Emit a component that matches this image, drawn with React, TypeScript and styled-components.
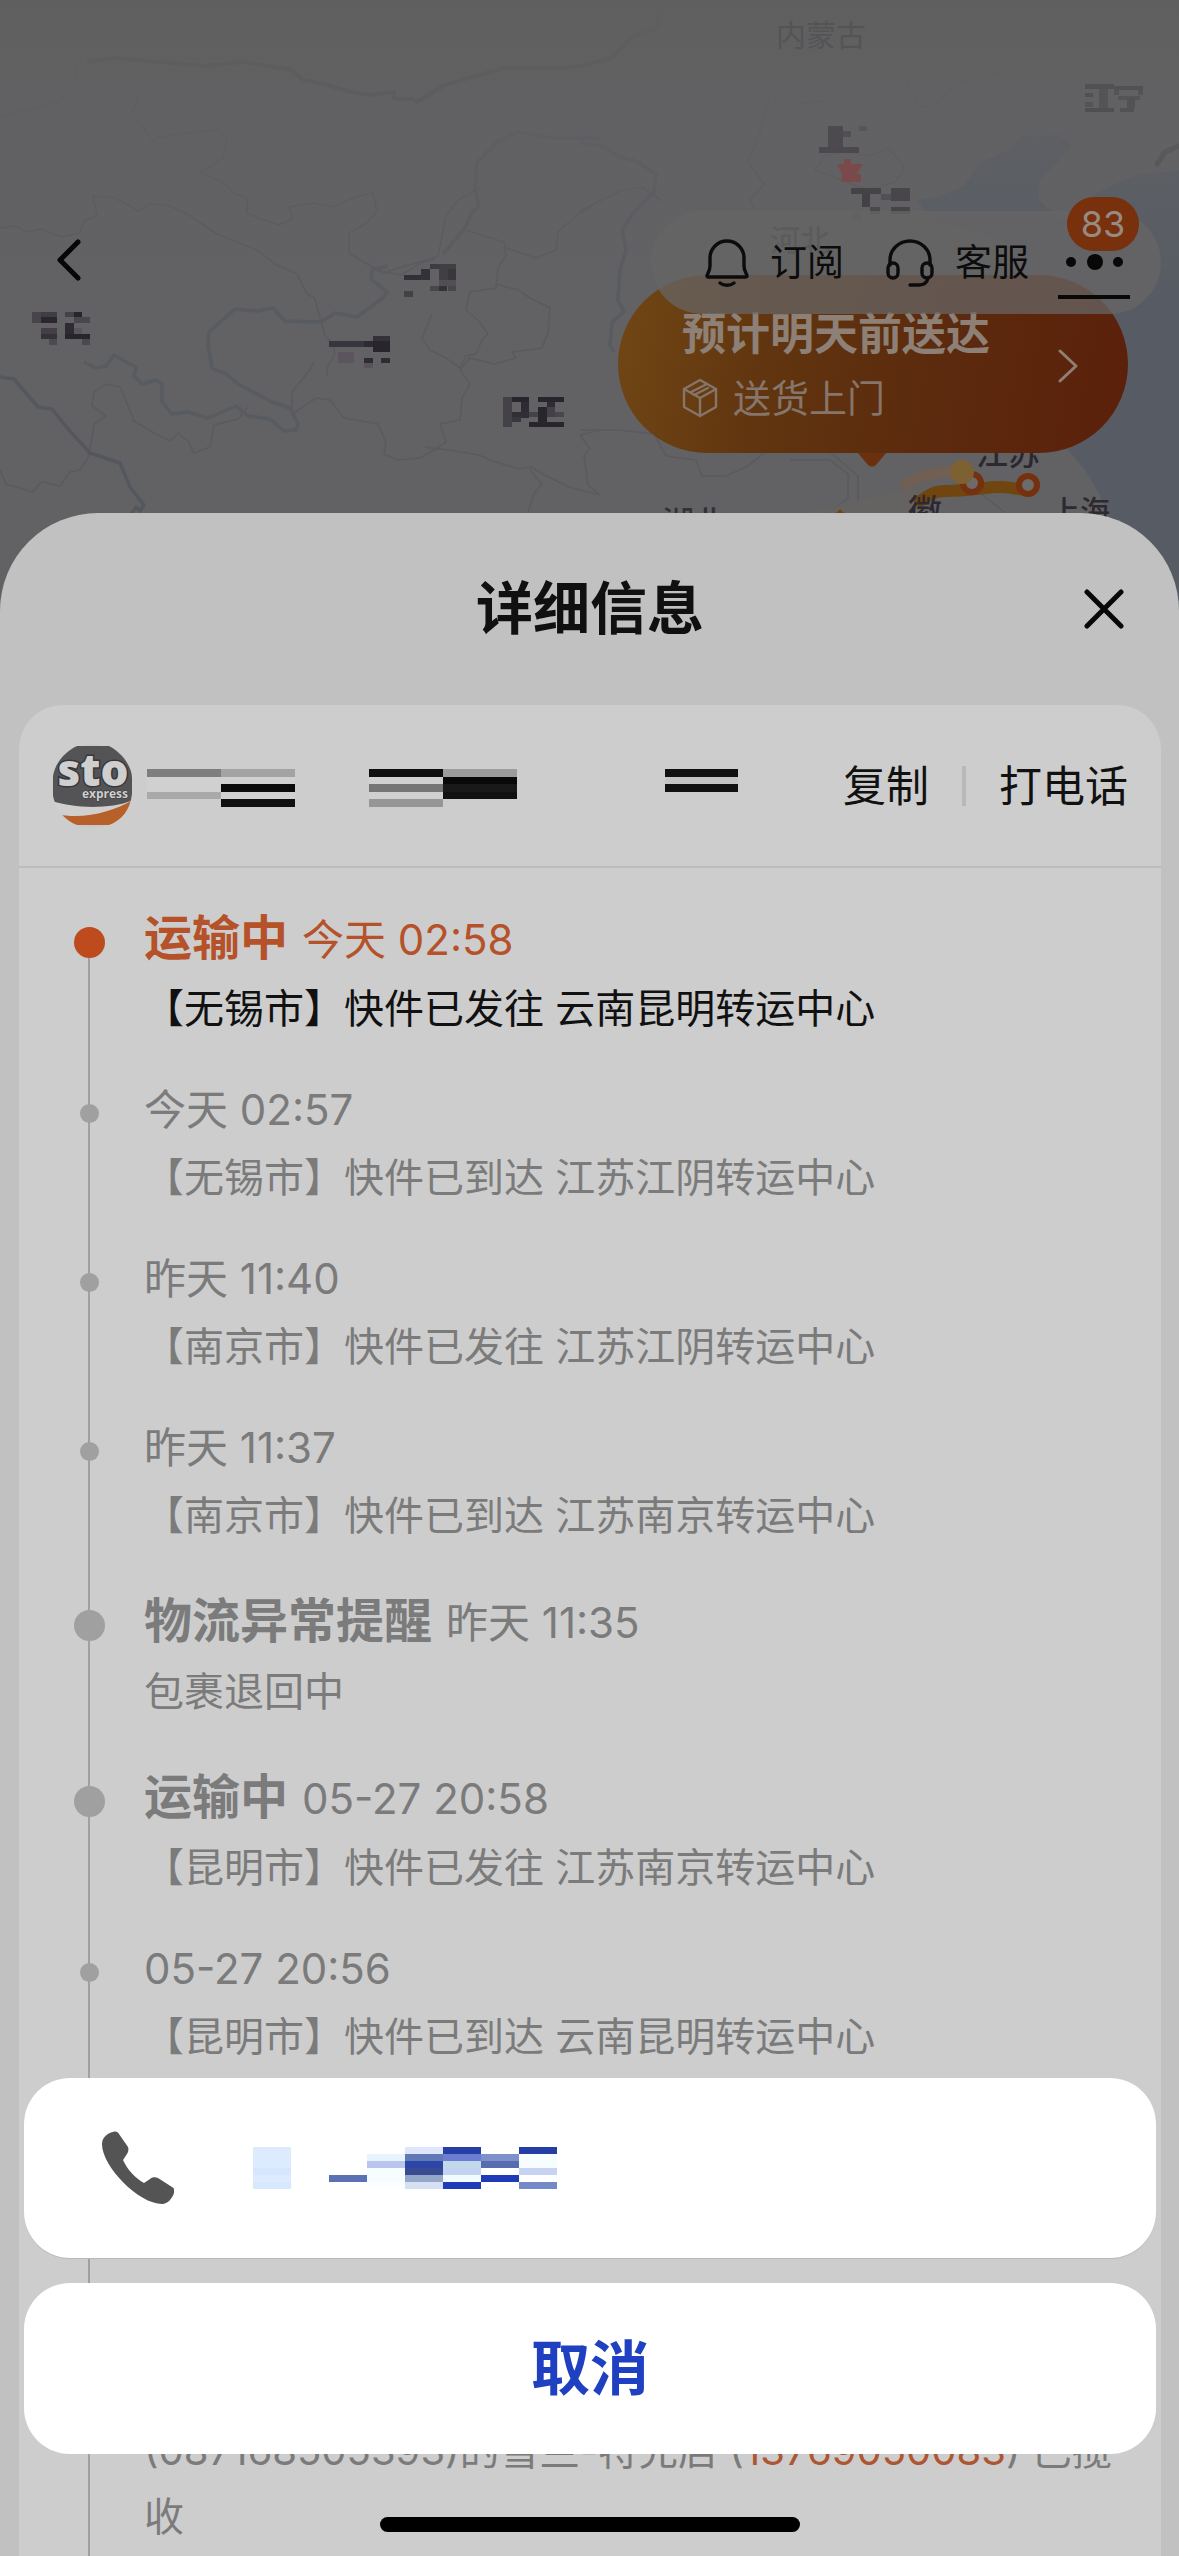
import React from 'react';
import styled, { createGlobalStyle, css } from 'styled-components';

const GlobalStyle = createGlobalStyle`
  *, *::before, *::after { box-sizing: border-box; }
  html, body, #root { height: 100%; }
  body {
    margin: 0;
    background: #cdcdcd;
    font-family: Inter, "Noto Sans CJK SC", "Noto Sans", sans-serif;
    color: #111;
  }
  button {
    font: inherit;
    color: inherit;
    background: none;
    border: 0;
    padding: 0;
    margin: 0;
    cursor: pointer;
  }
  h1, h2, p, ol { margin: 0; padding: 0; font-weight: 400; }
`;

/* ---------- page shell ---------- */

const Screen = styled.main`
  position: relative;
  display: flex;
  flex-direction: column;
  height: 100vh;
  overflow: hidden;
  background: #626264;
`;

const MapCanvas = styled.svg`
  position: absolute;
  top: 0;
  left: 0;
  width: 100%;
  height: 640px;
`;

const MapHeader = styled.header`
  position: relative;
  flex: none;
  display: flex;
  justify-content: space-between;
  align-items: flex-start;
  height: 513px;
  padding: 211px 18px 0 48px;
`;

const BackButton = styled.button`
  display: flex;
  align-items: center;
  height: 97px;
`;

const HeaderRight = styled.div`
  position: relative;
  display: flex;
  flex-direction: column;
  align-items: flex-end;
`;

const Toolbar = styled.nav`
  position: relative;
  z-index: 1;
  display: flex;
  align-items: center;
  justify-content: space-between;
  width: 510px;
  height: 103px;
  padding: 0 30px 0 54px;
  border-radius: 52px;
  background: rgba(103, 102, 102, 0.75);
`;

const Tools = styled.div`
  display: flex;
  gap: 42px;
`;

const Tool = styled.button`
  display: flex;
  align-items: center;
  gap: 21px;
  font-size: 37px;
  line-height: 48px;
  white-space: nowrap;
  color: #0c0c0c;
`;

const MoreButton = styled.button`
  position: relative;
  display: flex;
  flex-direction: column;
  align-items: center;
  justify-content: flex-end;
  gap: 24px;
  width: 74px;
  height: 73px;
`;

const Underline = styled.span`
  width: 72px;
  height: 4px;
  background: #080808;
`;

const Badge = styled.span`
  position: absolute;
  top: -29px;
  right: -8px;
  width: 72px;
  height: 54px;
  border-radius: 27px;
  background: #78300d;
  color: #978a82;
  font-size: 36px;
  line-height: 54px;
  text-align: center;
`;

const EtaPill = styled.button`
  display: flex;
  align-items: center;
  justify-content: space-between;
  width: 510px;
  height: 178px;
  margin: -39px 33px 0 0;
  padding: 4px 49px 0 64px;
  border-radius: 89px;
  background: linear-gradient(100deg, #714715 0%, #61350f 30%, #5c2b0e 60%, #5b200b 100%);
  text-align: left;
`;

const EtaTitle = styled.span`
  display: block;
  font-size: 44px;
  font-weight: 700;
  line-height: 60px;
  color: #8d8076;
`;

const EtaNote = styled.span`
  display: flex;
  align-items: center;
  gap: 15px;
  margin-top: 4px;
  font-size: 38px;
  line-height: 60px;
  color: #85756a;
`;

/* ---------- detail sheet ---------- */

const Sheet = styled.section`
  position: relative;
  flex: 1;
  display: flex;
  flex-direction: column;
  min-height: 0;
  padding: 0 18px 0 19px;
  border-radius: 98px 98px 0 0;
  background: #c1c1c1;
`;

const SheetHeader = styled.div`
  flex: none;
  display: grid;
  grid-template-columns: 1fr auto 1fr;
  align-items: center;
  height: 192px;
  padding: 0 37px;
`;

const SheetTitle = styled.h1`
  grid-column: 2;
  font-size: 57px;
  font-weight: 700;
  line-height: 80px;
  color: #101010;
`;

const CloseButton = styled.button`
  display: flex;
  justify-self: end;
`;

const Card = styled.div`
  flex: 1;
  min-height: 0;
  border-radius: 44px 44px 0 0;
  background: #cdcdcd;
`;

const CourierRow = styled.div`
  display: flex;
  align-items: center;
  height: 163px;
  padding: 0 33px;
  border-bottom: 2px solid #bcbcbc;
`;

const CourierActions = styled.div`
  display: flex;
  align-items: center;
  gap: 33px;
  margin-left: auto;
`;

const TextButton = styled.button`
  font-size: 43px;
  line-height: 60px;
  color: #111;
`;

const Separator = styled.span`
  width: 4px;
  height: 40px;
  background: #b8b8b8;
`;

/* Redacted strings are drawn as a coarse grid of flat cells. */
const Pixels = styled.span<{ $cols: string; $rows: string }>`
  display: grid;
  grid-template-columns: ${p => p.$cols};
  grid-auto-rows: ${p => p.$rows};
`;

const Pixel = styled.span<{ $fill: string }>`
  background: ${p => p.$fill};
`;

const CourierPixels = styled(Pixels)`
  margin: 4px 0 0 14px;
`;

/* ---------- timeline ---------- */

const Timeline = styled.ol`
  list-style: none;
  padding-top: 36px;
`;

const Entry = styled.li<{ $first?: boolean; $gap?: number }>`
  display: grid;
  grid-template-columns: 125px 1fr;
  padding-right: 40px;
  ${p => p.$gap && css`padding-top: ${p.$gap}px;`}
  background: linear-gradient(#a0a0a0, #a0a0a0) 69px ${p => (p.$first ? '34px' : '0')} / 2px 100% no-repeat;
`;

const DotCell = styled.span<{ $major?: boolean }>`
  display: flex;
  align-items: center;
  justify-content: center;
  height: ${p => (p.$major ? 77 : 66)}px;
  padding-left: 15px;
`;

const Dot = styled.span<{ $major?: boolean; $active?: boolean }>`
  width: ${p => (p.$major ? 31 : 19)}px;
  height: ${p => (p.$major ? 31 : 19)}px;
  border-radius: 50%;
  background: ${p => (p.$active ? '#bd4b1e' : '#a0a0a0')};
`;

const EntryBody = styled.div<{ $active?: boolean }>`
  padding-bottom: 38px;
  color: ${p => (p.$active ? '#111' : '#7b7b7b')};
`;

const EntryHead = styled.h2<{ $major?: boolean; $active?: boolean }>`
  display: flex;
  align-items: baseline;
  gap: 14px;
  height: ${p => (p.$major ? 67 : 60)}px;
  font-size: 42px;
  line-height: ${p => (p.$major ? 67 : 60)}px;
  color: ${p => (p.$active ? '#b5522a' : '#7b7b7b')};
`;

const Status = styled.strong`
  font-size: 48px;
  font-weight: 700;
`;

const EntryText = styled.p`
  margin-top: 5px;
  font-size: 40px;
  line-height: 66px;
`;

const PhoneLink = styled.a`
  color: #ad5632;
  text-decoration: none;
`;

/* ---------- action sheet ---------- */

const ActionSheet = styled.div`
  position: fixed;
  left: 24px;
  right: 23px;
  bottom: 102px;
  display: flex;
  flex-direction: column;
  gap: 25px;
`;

const CallAction = styled.button`
  display: flex;
  align-items: center;
  gap: 79px;
  height: 180px;
  padding: 0 78px;
  border-radius: 46px;
  background: #fff;
  box-shadow: 0 1px 0 #b8b8b8;
`;

const CancelAction = styled.button`
  height: 171px;
  border-radius: 46px;
  background: #fff;
  color: #1f40c0;
  font-size: 59px;
  font-weight: 700;
  line-height: 80px;
`;

const HomeBar = styled.div`
  position: fixed;
  bottom: 24px;
  left: 50%;
  width: 420px;
  height: 15px;
  margin-left: -210px;
  border-radius: 8px;
  background: #000;
`;

/* ---------- drawings ---------- */

type Cell = [number, number, number, number, string];

const mapCells: Cell[] = [
  [32, 312, 9, 11, '#47444a'], [41, 312, 16, 6, '#403d43'], [41, 317, 16, 6, '#2b272e'], [41, 328, 16, 6, '#443f46'], [41, 334, 16, 5, '#373239'], [49, 339, 8, 6, '#4d4a50'],
  [65, 312, 9, 5, '#454248'], [74, 312, 8, 5, '#29252c'], [74, 317, 16, 6, '#4a464d'], [65, 323, 9, 11, '#2f2b32'], [74, 328, 8, 6, '#59555b'], [65, 334, 25, 5, '#29252c'], [82, 339, 8, 6, '#4b484e'],
  [404, 275, 17, 5, '#332f36'], [421, 269, 9, 11, '#353138'], [430, 264, 9, 5, '#3f3b42'], [439, 264, 17, 16, '#413e44'], [448, 269, 8, 11, '#39363c'], [430, 286, 9, 5, '#49464c'], [439, 286, 8, 5, '#343037'], [439, 280, 17, 6, '#514e54'], [448, 286, 8, 5, '#48454b'], [404, 291, 9, 6, '#434046'],
  [329, 341, 35, 6, '#39353c'], [364, 341, 10, 6, '#2e2a31'], [373, 336, 17, 6, '#353138'], [373, 341, 17, 11, '#29252c'], [338, 352, 16, 11, '#5c545e'], [364, 358, 9, 5, '#2f2b32'], [381, 358, 9, 5, '#2f2b32'], [364, 363, 9, 5, '#59525b'],
  [503, 397, 9, 30, '#444148'], [512, 397, 17, 5, '#29252c'], [521, 402, 8, 16, '#2f2b32'], [512, 412, 17, 5, '#322e35'], [512, 417, 9, 5, '#3b373e'], [538, 397, 26, 5, '#29252c'], [547, 402, 8, 5, '#302c33'], [538, 407, 9, 16, '#29252c'], [547, 407, 8, 10, '#434047'], [555, 412, 9, 5, '#49464c'], [529, 412, 9, 5, '#454248'], [529, 422, 35, 5, '#29252c'],
  [828, 126, 15, 22, '#4c494f'], [843, 131, 8, 6, '#514e54'], [859, 126, 8, 5, '#57555a'], [819, 147, 40, 6, '#4b484e'],
  [851, 188, 30, 6, '#454248'], [862, 194, 8, 13, '#434046'], [881, 194, 10, 6, '#525055'], [891, 188, 19, 13, '#48454b'], [870, 207, 10, 7, '#4a474d'], [891, 207, 19, 7, '#464349'], [852, 214, 9, 6, '#565459'],
  [1085, 84, 29, 5, '#515053'], [1085, 93, 8, 4, '#515053'], [1099, 89, 9, 20, '#545356'], [1085, 102, 8, 5, '#545356'], [1085, 108, 29, 4, '#4f4e51'], [1114, 86, 29, 4, '#515053'], [1114, 90, 5, 5, '#545356'], [1138, 90, 5, 5, '#545356'], [1118, 96, 22, 4, '#545356'], [1127, 98, 8, 10, '#525154'], [1120, 108, 14, 4, '#525154'],
];

const MapArt = () => (
  <MapCanvas viewBox="0 0 1179 640" preserveAspectRatio="xMidYMin slice" aria-hidden="true">
    <defs>
      <linearGradient id="fog" x1="0" y1="0" x2="0" y2="1">
        <stop offset="0" stopColor="#5f5f5f" />
        <stop offset="0.4" stopColor="#616163" stopOpacity="0.7" />
        <stop offset="1" stopColor="#616163" stopOpacity="0" />
      </linearGradient>
    </defs>
    <rect width="1179" height="640" fill="#626264" />
    <path
      fill="#575c64"
      d="M1179 171 L1140 174 1110 186 1085 200 1062 220 1038 200 1040 180 1060 160 1071 146 1058 134 1040 137 1022 135 1010 150 980 162 964 186 940 196 918 200 925 214 950 226 975 232 1000 240 1020 252 1010 275 990 300 1010 330 1060 350 1066 400 1068 450 1085 470 1098 492 1108 513 1125 560 1179 640 Z"
    />
    <g fill="none" stroke="#5a5b5e" strokeWidth="1.6">
      <path d="M0 228l15-2 12 6 14-3 20 8 19-4 4-12 13-5-4-20 22 2 24 13 10-7 18 1 22 10 28 19 40 16 18 14 22 10 10 20 8 4 4 16 6 22 8 8 2 10-8 14v8" />
      <path d="M77 65l-3 25-18 12-56 15M120 62l18 38-6 12 22 30 2-4 24-4 36-4 11 8-4 20-12 8-12 6 24 10 12 12 12 3v16l14 6 18 6 14-6-4-12 24-4 20 4 22-10 18-4 4 18-10 12-18 10v20l30 18 22 4 20-12 14-4" />
      <path d="M480 188l-22 12-12 16-8 40-8 3-48 14M466 230l38 12 2 14-8 12-2 20-26 4-4 18 12 10 10 14-6 6-6 14-10 2-6 12-14-10-16-8-8-12 6-14 4-10" />
      <path d="M506 248l30 10 20-8 2-18 18-16 24-16M496 284l22 6 12 8 20 10-2 24-6 16-30 4 4 6-22 6-24-6-10 12 10 14-8 14-2 22-20 4 6 18-12 8-14 8-22 2-14-6 2-12-8-18-34-6-14-18-14-2-24 16v-22l18-22 4-8" />
      <path d="M0 470l6 14 14 4 12 4 10-10 18 4 10-14 10-2 8-12 4-20 2-14 12-8-14-10 2-14 12-8 14 3 6 14 8 20 20 12 16 8 8-8 10 8 6 12 16-6 4-22 24-6 10-12" />
      <path d="M425 447l30 4 24 4 14 6 26 8 12-2 14 8 24 12 31 8M530 470l12 14-8 10-6 18M600 430l-20 5 10 14-6 6 4 30 12 10" />
      <path d="M580 211l40-20 22-4 20 14M760 132l10-40 18-2 14 14 26-4 40-32 24-2 12 10 14 30 12 2 30-26 40-10 20-8M760 132l-12 30 16 22-14 16 4 8M815 170l10-14 20-4 24 4 20-8 16 20-10 14-28 8-20-8zM580 430l40 0 34 4 12 22 30 4 6 16 24 0 22-10 22-18 30 4 30 0 28 24 0 30M790 460l40 0 18 14 0 24-20 16M930 470l30 6 24 20 20 16" />
    </g>
    <g fill="none" stroke="#585b60" strokeWidth="3.5" strokeLinejoin="round">
      <path d="M84 362l12 6 10-2 8-11 10 6 12 6-2 9 8 8 14-4 6 4v18l10 12 16-2 20 6 28-12 12 10 22 3 14 12 12-1 2-6-8-16-18-6-34-18-12-10-14-6-4-22 1-14 26-23 22 2 16-3 12 13 36 1 14-9 22 4 26-19 4-6-16-13 1-9 16-4M443 254l22-26 6-14 8-8-4-16 2-28 20-20 20-10 38 6 45 0" />
      <path d="M0 377l14 2 24 28 14 2 16 20 22 24 30 10 10 24 14 18-4 6-4-4-4 6 2 8" stroke="#54585e" />
      <path d="M580 143l22 3 16 10 20 6 18 12-2 18-20 20-12 18 4 20-6 20-2 30 6 12-12 10-2 24 4 6" />
    </g>
    <path d="M87 61l28-3 90 8 38-4 49 8 11 10 20 4 28 8 18 3 25-3v7h18l5 3 28-17 58-17 60 0 18-2 30-8 22-22 20-6 7-6-4-12" fill="none" stroke="#4f4f4e" strokeWidth="4" strokeLinejoin="round" />
    <path d="M1179 146l-14 6-8 12" fill="none" stroke="#4c4d4f" strokeWidth="5" strokeLinecap="round" />
    <rect width="1179" height="300" fill="url(#fog)" />
    <path d="M903 488c16-14 30-15 50-17" fill="none" stroke="#6f5f54" strokeWidth="12" />
    <path d="M800 514l100-24 30 0-14 24z" fill="#666460" opacity="0.7" />
    <path d="M916 504c14-10 18-13 30-13 24 0 32-3 50-4s20 4 34 2" fill="none" stroke="#70450f" strokeWidth="12" />
    <g fontSize="34" fontWeight="500" fontFamily='"Noto Sans CJK SC", sans-serif'>
      <text x="776" y="46" fill="#545456" fontSize="30" fontWeight="400">内蒙古</text>
      <text x="770" y="251" fill="#3e3e41" fontSize="30">河北</text>
      <text x="976" y="465" fill="#2b2830" fontSize="32">江苏</text>
      <text x="908" y="524" fill="#2d2930">徽</text>
      <text x="1050" y="522" fill="#2d2930" fontSize="30">上海</text>
      <text x="662" y="534" fill="#343037" fontSize="32">湖北</text>
    </g>
    <g shapeRendering="crispEdges">
      {mapCells.map(([x, y, w, h, fill], i) => (
        <rect key={i} x={x} y={y} width={w} height={h} fill={fill} />
      ))}
    </g>
    <path d="M837 164l7 0 0-5 7 0 0 5 12 0-6 10 4 0 0 8-20 0 1-8z" fill="#7a4a4b" />
    <circle cx="972" cy="483" r="9" fill="#6c6b6a" stroke="#75310f" strokeWidth="6" />
    <circle cx="1028" cy="485" r="9" fill="#6c6b6a" stroke="#75310f" strokeWidth="6" />
    <circle cx="962" cy="472" r="12" fill="#7d6133" />
    <path d="M858 453h28l-10 12q-4 3-8 0z" fill="#6b300e" />
    <path d="M836 513l4-4 4 4z" fill="#70450f" />
  </MapCanvas>
);

const BackIcon = () => (
  <svg width="42" height="42" viewBox="0 0 42 42" fill="none" stroke="#050505" strokeWidth="5" strokeLinecap="round" strokeLinejoin="round" aria-hidden="true">
    <path d="M30 3L12 21l18 18" />
  </svg>
);

const BellIcon = () => (
  <svg width="44" height="48" viewBox="0 0 44 48" fill="none" stroke="#0c0c0c" strokeWidth="3.4" strokeLinecap="round" strokeLinejoin="round" aria-hidden="true">
    <path d="M5 27V19a17 17 0 0 1 34 0v8c0 5 3 8 3 10 0 1-1 1-2 1H4c-1 0-2 0-2-1 0-2 3-5 3-10z" />
    <path d="M15 44c4 3 10 3 14 0" />
  </svg>
);

const HeadsetIcon = () => (
  <svg width="48" height="48" viewBox="0 0 48 48" fill="none" stroke="#0c0c0c" strokeWidth="3.4" strokeLinecap="round" strokeLinejoin="round" aria-hidden="true">
    <path d="M4 26v-5a20 19 0 0 1 40 0v5" />
    <rect x="2" y="24" width="10" height="15" rx="5" />
    <rect x="36" y="24" width="10" height="15" rx="5" />
    <path d="M42 39c-1 5-4 7-9 7h-9" />
  </svg>
);

const DotsIcon = () => (
  <svg width="60" height="18" viewBox="0 0 60 18" fill="#080808" aria-hidden="true">
    <circle cx="7" cy="9" r="5" />
    <circle cx="31" cy="9" r="8" />
    <circle cx="54" cy="9" r="5" />
  </svg>
);

const BoxIcon = () => (
  <svg width="36" height="40" viewBox="0 0 36 40" fill="none" stroke="#85756a" strokeWidth="2.4" strokeLinejoin="round" strokeLinecap="round" aria-hidden="true">
    <path d="M18 2l16 9v18l-16 9-16-9V11z" />
    <path d="M2 11l16 9 16-9M18 20v18M9 14l16-8M12 17l14-7" />
  </svg>
);

const ChevronIcon = () => (
  <svg width="22" height="34" viewBox="0 0 22 34" fill="none" stroke="#8f7f74" strokeWidth="3" strokeLinecap="round" strokeLinejoin="round" aria-hidden="true">
    <path d="M3 2l16 15L3 32" />
  </svg>
);

const CloseIcon = () => (
  <svg width="40" height="40" viewBox="0 0 40 40" stroke="#080808" strokeWidth="5" strokeLinecap="round" aria-hidden="true">
    <path d="M3 3l34 34M37 3L3 37" />
  </svg>
);

const StoLogo = () => (
  <svg width="81" height="84" viewBox="0 0 81 84" role="img" aria-label="sto express">
    <defs>
      <clipPath id="logoClip"><path d="M25 2h32C72 10 80 24 80 34v16C78 66 70 76 57 81H25C12 76 4 66 1 52V32C3 20 12 8 25 2z" /></clipPath>
    </defs>
    <ellipse cx="40" cy="42" rx="40" ry="42" fill="#c8c8c8" />
    <g clipPath="url(#logoClip)">
      <rect width="81" height="84" fill="#d0cfce" />
      <path d="M0 0h81v56C58 66 20 64 0 57z" fill="#545457" />
      <path d="M4 70c28 6 56-2 77-14v28H4z" fill="#b8602a" />
    </g>
    <g fontFamily='"Open Sans", sans-serif' fontWeight="800" fill="#cfcfcf" stroke="#38383a" paintOrder="stroke" textAnchor="middle">
      <text x="41" y="42" fontSize="44" strokeWidth="3">sto</text>
      <text x="53" y="54" fontSize="12" strokeWidth="1" fontWeight="700">express</text>
    </g>
  </svg>
);

const PhoneIcon = () => (
  <svg width="72" height="74" viewBox="0 0 72 74" fill="#545454" aria-hidden="true">
    <path d="M11 1c3-1 5 0 6 2l9 13c1 3 0 5-1 7l-4 6c4 9 12 18 21 23l6-4c2-2 5-2 8-1l14 9c2 1 3 3 2 6-2 6-6 10-11 11C38 74 0 36 0 13 0 7 5 2 11 1z" />
  </svg>
);

/* ---------- redaction grids ---------- */

const _ = 'transparent';

const courierCells = [
  '#7e7e7e', '#a3a3a3', _, '#0f0f0f', '#9c9c9c', _, '#111111',
  '#d0d0d0', '#d0d0d0', _, '#d0d0d0', '#090909', _, '#c4c4c4',
  '#d0d0d0', '#0b0b0b', _, '#757575', '#191919', _, '#111111',
  '#a9a9a9', '#d0d0d0', _, '#d0d0d0', '#111111', _, _,
  _, '#101010', _, '#969696', _, _, _,
];

const numberCells = [
  '#dcebfd', _, _, _, '#dfe6fb', '#2440a2', _, '#243ea6',
  '#dcebfd', _, _, '#e8f3fd', '#617ab5', '#6d7dd3', '#7f91cb', '#f7fdff',
  '#dcebfd', _, _, '#b9c5ef', '#2c45a8', '#c3d8ea', '#566db0', '#f7fdff',
  '#d6e6fd', _, _, '#f7fcff', '#3a4c91', '#c3d3f1', _, '#c8d3f4',
  '#dcebfd', _, '#5a72b4', '#f7fcff', '#94a7c9', '#f0fcff', '#1f3bb8', _,
  '#d8e8fc', _, _, '#fafeff', '#d5e1f3', '#1f3bb8', _, '#7389c8',
];

/* ---------- data ---------- */

interface TrackEvent {
  status?: string;
  time: string;
  text: string;
  active?: boolean;
}

const events: TrackEvent[] = [
  { status: '运输中', time: '今天 02:58', text: '【无锡市】快件已发往 云南昆明转运中心', active: true },
  { time: '今天 02:57', text: '【无锡市】快件已到达 江苏江阴转运中心' },
  { time: '昨天 11:40', text: '【南京市】快件已发往 江苏江阴转运中心' },
  { time: '昨天 11:37', text: '【南京市】快件已到达 江苏南京转运中心' },
  { status: '物流异常提醒', time: '昨天 11:35', text: '包裹退回中' },
  { status: '运输中', time: '05-27 20:58', text: '【昆明市】快件已发往 江苏南京转运中心' },
  { time: '05-27 20:56', text: '【昆明市】快件已到达 云南昆明转运中心' },
];

const TrackEntry = ({ event }: { event: TrackEvent }) => {
  const major = Boolean(event.status);
  return (
    <Entry $first={event.active}>
      <DotCell $major={major}><Dot $major={major} $active={event.active} /></DotCell>
      <EntryBody $active={event.active}>
        <EntryHead $major={major} $active={event.active}>
          {event.status && <Status>{event.status}</Status>}
          <time>{event.time}</time>
        </EntryHead>
        <EntryText>{event.text}</EntryText>
      </EntryBody>
    </Entry>
  );
};

export default function App() {
  return (
    <>
      <GlobalStyle />
      <Screen>
        <MapArt />
        <MapHeader>
          <BackButton aria-label="返回"><BackIcon /></BackButton>
          <HeaderRight>
            <Toolbar>
              <Tools>
                <Tool><BellIcon />订阅</Tool>
                <Tool><HeadsetIcon />客服</Tool>
              </Tools>
              <MoreButton aria-label="更多">
                <DotsIcon />
                <Underline />
                <Badge>83</Badge>
              </MoreButton>
            </Toolbar>
            <EtaPill>
              <span>
                <EtaTitle>预计明天前送达</EtaTitle>
                <EtaNote><BoxIcon />送货上门</EtaNote>
              </span>
              <ChevronIcon />
            </EtaPill>
          </HeaderRight>
        </MapHeader>

        <Sheet>
          <SheetHeader>
            <SheetTitle>详细信息</SheetTitle>
            <CloseButton aria-label="关闭"><CloseIcon /></CloseButton>
          </SheetHeader>
          <Card>
            <CourierRow>
              <StoLogo />
              <CourierPixels $cols="74px 74px 74px 74px 74px 148px 73px" $rows="8px 7px" aria-hidden="true">
                {courierCells.map((fill, i) => <Pixel key={i} $fill={fill} />)}
              </CourierPixels>
              <CourierActions>
                <TextButton>复制</TextButton>
                <Separator />
                <TextButton>打电话</TextButton>
              </CourierActions>
            </CourierRow>
            <Timeline>
              {events.map(event => <TrackEntry key={event.time} event={event} />)}
              <Entry $gap={305}>
                <span />
                <EntryBody>
                  <EntryText>
                    (087168505393)的雪兰-特充店 (<PhoneLink href="tel:13769050083">13769050083</PhoneLink>) 已揽收
                  </EntryText>
                </EntryBody>
              </Entry>
            </Timeline>
          </Card>
        </Sheet>

        <ActionSheet role="dialog" aria-label="打电话">
          <CallAction aria-label="拨打">
            <PhoneIcon />
            <Pixels $cols="repeat(8, 38px)" $rows="7px" aria-hidden="true">
              {numberCells.map((fill, i) => <Pixel key={i} $fill={fill} />)}
            </Pixels>
          </CallAction>
          <CancelAction>取消</CancelAction>
        </ActionSheet>
        <HomeBar />
      </Screen>
    </>
  );
}
